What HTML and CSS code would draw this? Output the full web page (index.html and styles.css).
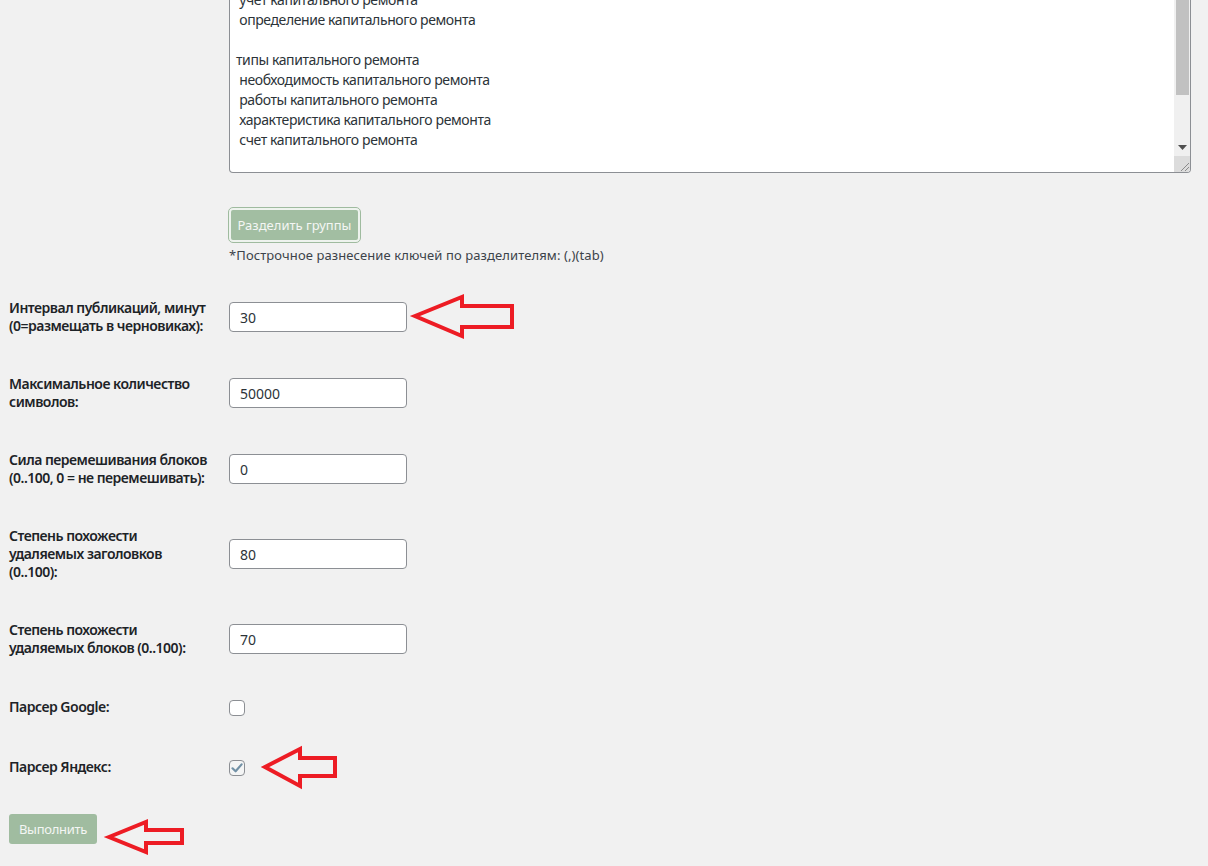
FILE: index.html
```html
<!DOCTYPE html>
<html lang="ru">
<head>
<meta charset="utf-8">
<title>Настройки</title>
<link rel="stylesheet" href="styles.css">
</head>
<body>
<div class="page">
  <div class="row row-top">
    <div class="th"></div>
    <div class="td td-top">
      <div class="ta">
        <div class="ta-text"><div class="ln"> учет капитального ремонта</div><div class="ln"> определение капитального ремонта</div><div class="ln"> </div><div class="ln">типы капитального ремонта</div><div class="ln"> необходимость капитального ремонта</div><div class="ln"> работы капитального ремонта</div><div class="ln"> характеристика капитального ремонта</div><div class="ln"> счет капитального ремонта</div></div>
        <div class="ta-scroll">
          <div class="thumb"></div>
          <div class="track"></div>
          <div class="sb-arrow"><svg width="9" height="5" viewBox="0 0 9 5"><polygon points="0,0 9,0 4.5,5" fill="#505050"/></svg></div>
          <div class="sb-corner"><svg width="12" height="12" viewBox="0 0 12 12"><path d="M11 3 L3 11 M11 7 L7 11" stroke="#8a8a8a" stroke-width="1" fill="none"/></svg></div>
        </div>
      </div>
      <button class="btn btn-split" type="button">Разделить группы</button>
      <p class="note">*Построчное разнесение ключей по разделителям: (,)(tab)</p>
    </div>
  </div>

  <div class="row">
    <div class="th">Интервал публикаций, минут<br>(0=размещать в черновиках):</div>
    <div class="td"><input class="inp" type="text" value="30"></div>
  </div>
  <div class="row">
    <div class="th">Максимальное количество<br>символов:</div>
    <div class="td"><input class="inp" type="text" value="50000"></div>
  </div>
  <div class="row">
    <div class="th">Сила перемешивания блоков<br>(0..100, 0 = не перемешивать):</div>
    <div class="td"><input class="inp" type="text" value="0"></div>
  </div>
  <div class="row">
    <div class="th">Степень похожести<br>удаляемых заголовков<br>(0..100):</div>
    <div class="td"><input class="inp" type="text" value="80"></div>
  </div>
  <div class="row">
    <div class="th">Степень похожести<br>удаляемых блоков (0..100):</div>
    <div class="td"><input class="inp" type="text" value="70"></div>
  </div>
  <div class="row row-check">
    <div class="th">Парсер Google:</div>
    <div class="td"><span class="cb"></span></div>
  </div>
  <div class="row row-check">
    <div class="th">Парсер Яндекс:</div>
    <div class="td"><span class="cb cb-on"><svg width="12" height="12" viewBox="0 0 12 12"><path d="M1.5 6.3 L4.6 9.3 L10.6 2.4" stroke="#7291a6" stroke-width="2.2" fill="none" stroke-linecap="round" stroke-linejoin="round"/></svg></span></div>
  </div>

  <div class="submit"><button class="btn btn-run" type="button">Выполнить</button></div>

  <svg class="arrows" width="1208" height="866" viewBox="0 0 1208 866">
    <polygon points="415,316 462,297 462,306 512,306 512,327 462,327 462,336" />
    <polygon points="265,767 300,749 300,758 335,758 335,776 300,776 300,786" />
    <polygon points="109,837 146,822 146,830 182,830 182,843 146,843 146,852" />
  </svg>
</div>
</body>
</html>
```

FILE: styles.css
```css
html, body {
  margin: 0;
  padding: 0;
  background: #f1f1f1;
}
body {
  font-family: "Noto Sans", "Open Sans", sans-serif;
  font-size: 13px;
  color: #1d2327;
  overflow: hidden;
  height: 866px;
}
.page {
  position: relative;
  width: 1208px;
  height: 866px;
  padding: 0 7px 0 9px;
  box-sizing: border-box;
}
.row {
  display: grid;
  grid-template-columns: 210px 1fr;
}
.th {
  padding: 20px 10px 20px 0;
  font-size: 14px;
  font-weight: 600;
  line-height: 18px;
  white-space: nowrap;
  letter-spacing: -0.5px;
  color: #1d2327;
}
.row-top .th { padding: 0; }
.td {
  padding: 0 10px;
  display: flex;
  align-items: center;
}
.td-top {
  display: block;
  padding-top: 0;
}
.ta {
  margin-top: -10px;
  display: flex;
  background: #fff;
  border: 1px solid #8c8f94;
  border-top: none;
  border-radius: 0 0 4px 4px;
  height: 183px;
  box-sizing: border-box;
  overflow: hidden;
}
.ta-text {
  flex: 1;
  padding: 0 6px;
  font-size: 14px;
  line-height: 20px;
  color: #2c3338;
  white-space: pre;
  letter-spacing: -0.4px;
}
.ta-scroll {
  width: 16px;
  display: flex;
  flex-direction: column;
  background: #f0f0f0;
}
.thumb {
  height: 105px;
  margin: 0 1px 0 2px;
  background: #c1c1c1;
}
.track { flex: 1; }
.sb-arrow {
  height: 17px;
  display: flex;
  align-items: center;
  justify-content: center;
}
.sb-corner {
  height: 16px;
  background: #dcdcdc;
  display: flex;
  align-items: flex-end;
  justify-content: flex-end;
}
.btn {
  font-family: "Noto Sans", "Open Sans", sans-serif;
  font-size: 13px;
  color: #f4f6f4;
  background: #a2bea2;
  cursor: pointer;
}
.btn-split {
  display: block;
  margin: 35px 0 0 0;
  height: 34px;
  width: 131px;
  padding: 0;
  border: 2px solid #eef3ee;
  border-radius: 4px;
  outline: 1px solid #9fbb9f;
  outline-offset: 0;
}
.note {
  margin: 4px 0 0 0;
  font-size: 13px;
  line-height: 18px;
  color: #3c434a;
  letter-spacing: 0.1px;
  padding-bottom: 15px;
}
.inp {
  width: 178px;
  height: 30px;
  box-sizing: border-box;
  border: 1px solid #8c8f94;
  border-radius: 4px;
  padding: 0 10px;
  font-family: "Noto Sans", "Open Sans", sans-serif;
  font-size: 14px;
  color: #2c3338;
  background: #fff;
}
.row-check .th { padding: 21px 10px 21px 0; }
.cb {
  display: flex;
  align-items: center;
  justify-content: center;
  width: 16px;
  height: 16px;
  box-sizing: border-box;
  border: 1px solid #8c8f94;
  border-radius: 4px;
  background: #fff;
  margin-top: 2px;
}
.cb-on { background: #f4f5f5; }
.submit {
  padding-top: 17px;
}
.btn-run {
  width: 88px;
  height: 30px;
  padding: 0;
  border: none;
  border-radius: 3px;
  background: #a0bca0;
  letter-spacing: -0.3px;
}
.arrows {
  position: absolute;
  left: 0;
  top: 0;
  pointer-events: none;
}
.arrows polygon {
  fill: none;
  stroke: #ed1c24;
  stroke-width: 4;
  stroke-linejoin: miter;
}
```
